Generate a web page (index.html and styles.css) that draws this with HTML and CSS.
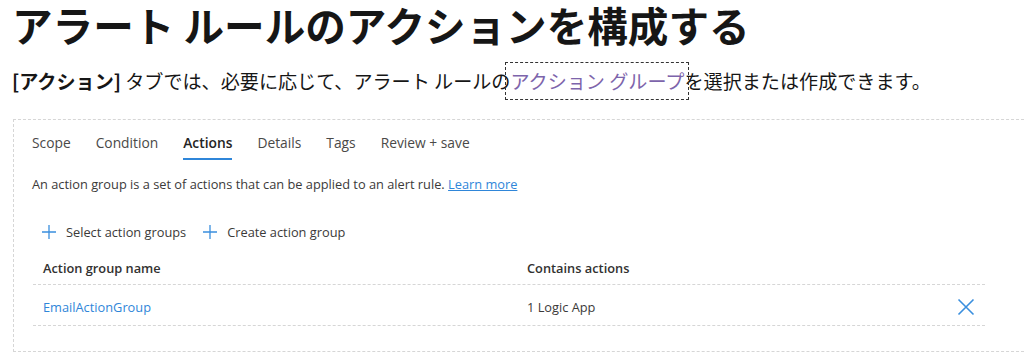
FILE: index.html
```html
<!DOCTYPE html>
<html lang="ja">
<head>
    <meta charset="utf-8">
    <title>アラート ルールのアクションを構成する</title>
    <meta name="viewport" content="width=device-width, initial-scale=1">
    <link rel="stylesheet" href="styles.css">
</head>
<body>
    <h1 class="page-title">アラート ルールのアクションを構成する</h1>
    <p class="intro"><strong>[アクション]</strong> タブでは、必要に応じて、アラート ルールの<a class="intro-link" href="#">アクション グループ</a>を選択または作成できます。</p>

    <div class="panel">
        <nav class="tabs">
            <span class="tab">Scope</span>
            <span class="tab">Condition</span>
            <span class="tab active">Actions</span>
            <span class="tab">Details</span>
            <span class="tab">Tags</span>
            <span class="tab">Review + save</span>
        </nav>

        <p class="description">An action group is a set of actions that can be applied to an alert rule. <a href="#">Learn more</a></p>

        <div class="toolbar">
            <button class="tool-btn" type="button">
                <svg class="plus" viewBox="0 0 16 16" width="16" height="16"><path d="M8 1v14M1 8h14" stroke="#3a8fde" stroke-width="1.3" fill="none"/></svg>
                Select action groups
            </button>
            <button class="tool-btn" type="button">
                <svg class="plus" viewBox="0 0 16 16" width="16" height="16"><path d="M8 1v14M1 8h14" stroke="#3a8fde" stroke-width="1.3" fill="none"/></svg>
                Create action group
            </button>
        </div>

        <div class="grid">
            <div class="grid-row grid-head">
                <div class="cell name">Action group name</div>
                <div class="cell">Contains actions</div>
                <div class="cell remove"></div>
            </div>
            <div class="grid-row grid-item">
                <div class="cell name"><a href="#">EmailActionGroup</a></div>
                <div class="cell">1 Logic App</div>
                <div class="cell remove">
                    <svg viewBox="0 0 18 18" width="18" height="18"><path d="M1.5 1.5l15 15M16.5 1.5l-15 15" stroke="#3a8fde" stroke-width="1.6" fill="none"/></svg>
                </div>
            </div>
        </div>
    </div>
</body>
</html>
```

FILE: styles.css
```css
:root {
    --text-color: #161616;
    --ui-text: #3b3a39;
    --tab-text: #4a4948;
    --azure-blue: #2f86d9;
    --visited: #7d64ab;
    --line-color: #d6d6d6;
}

* {
    margin: 0;
    padding: 0;
    box-sizing: border-box;
}

body {
    background-color: #fff;
    color: var(--text-color);
    font-family: "Noto Sans CJK JP", "Noto Sans", sans-serif;
    padding-left: 12px;
    overflow: hidden;
}

.page-title {
    font-size: 40.6px;
    font-weight: 700;
    line-height: 46px;
    padding-top: 2px;
}

.intro {
    font-size: 19.1px;
    line-height: 37px;
    margin-top: 15px;
    white-space: nowrap;
}

.intro strong {
    font-weight: 700;
}

.intro-link {
    color: var(--visited);
    text-decoration: none;
    outline: 1px dashed #333;
    outline-offset: 4px;
}

.panel {
    margin-top: 19px;
    margin-left: 1px;
    margin-right: -20px;
    border: 1px dashed var(--line-color);
    padding: 14px 0 25px 18px;
    font-family: "Open Sans", "Noto Sans", sans-serif;
    color: var(--ui-text);
}

.tabs {
    display: flex;
    gap: 25px;
}

.tab {
    font-size: 13.8px;
    line-height: 18px;
    padding-bottom: 6px;
    border-bottom: 2px solid transparent;
    color: var(--tab-text);
}

.tab.active {
    font-weight: 600;
    color: #252423;
    border-bottom-color: var(--azure-blue);
}

.description {
    font-size: 12.8px;
    line-height: 16px;
    margin-top: 16px;
}

.description a {
    color: var(--azure-blue);
}

.toolbar {
    display: flex;
    gap: 16px;
    margin-top: 28px;
    padding-left: 9px;
}

.tool-btn {
    display: flex;
    align-items: center;
    gap: 9px;
    height: 24px;
    background: none;
    border: none;
    font-family: inherit;
    font-size: 12.8px;
    color: var(--ui-text);
}

.grid {
    margin-top: 8px;
    margin-left: 1px;
    width: 952px;
}

.grid-row {
    display: grid;
    grid-template-columns: 494px 1fr 40px;
    align-items: center;
    border-bottom: 1px dashed var(--line-color);
}

.grid-head {
    height: 33px;
    font-size: 12.8px;
    font-weight: 600;
    color: #323130;
}

.grid-item {
    height: 41px;
    padding-top: 4px;
    font-size: 12.8px;
}

.cell.name {
    padding-left: 10px;
}

.cell a {
    color: var(--azure-blue);
    text-decoration: none;
}

.remove {
    display: flex;
    align-items: center;
    padding-left: 12px;
}
```
